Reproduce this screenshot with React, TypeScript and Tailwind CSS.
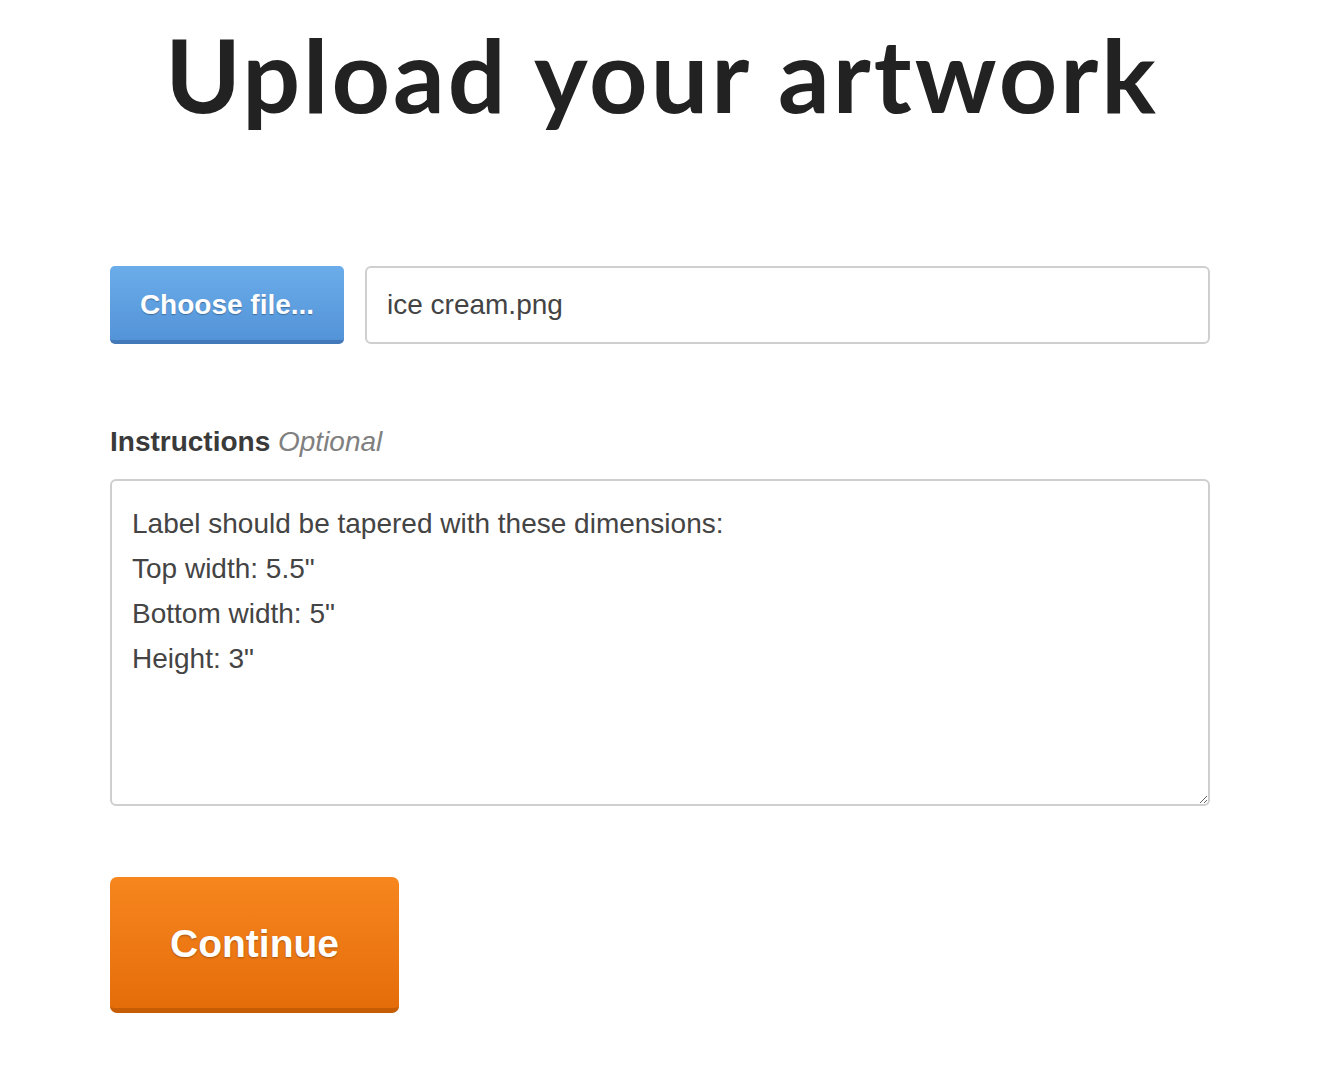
export default function App() {
  return (
    <div className="min-h-screen bg-white font-['Liberation_Sans',Arial,sans-serif] text-[#444]">
      <h1 className="pr-[16px] pt-[14px] text-center font-['Lato',sans-serif] text-[102px] font-bold leading-[120px] text-[#222] tracking-[3px]">
        Upload your artwork
      </h1>

      <div className="ml-[110px] mt-[132px] w-[1100px]">
        <div className="flex gap-[21px]">
          <button className="h-[78px] w-[234px] shrink-0 rounded-[5px] border-b-[4px] border-[#4379b9] bg-gradient-to-b from-[#6badea] to-[#5393d8] pt-[3px] text-[28px] font-bold text-white [text-shadow:0_1px_1px_rgba(0,0,0,0.3)]">
            Choose file...
          </button>
          <div className="flex h-[78px] flex-1 items-center rounded-[6px] border-2 border-[#cfcfcf] px-[20px] text-[28px] text-[#444]">
            ice cream.png
          </div>
        </div>

        <div className="mt-[80px] text-[28px] leading-[36px]">
          <span className="font-bold text-[#3a3a3a]">Instructions</span>{' '}
          <span className="italic text-[#808080]">Optional</span>
        </div>

        <textarea
          className="mt-[19px] block h-[327px] w-full resize-y rounded-[6px] border-2 border-[#cfcfcf] px-[20px] py-[20px] text-[28px] leading-[45px] text-[#444] outline-none"
          defaultValue={'Label should be tapered with these dimensions:\nTop width: 5.5"\nBottom width: 5"\nHeight: 3"'}
        />

        <button className="mt-[71px] h-[136px] w-[289px] rounded-[7px] border-b-[5px] border-[#c65d05] bg-gradient-to-b from-[#f7861e] to-[#e56d09] pt-[3px] text-[39px] font-bold text-white [text-shadow:0_1px_2px_rgba(0,0,0,0.3)]">
          Continue
        </button>
      </div>
    </div>
  );
}
